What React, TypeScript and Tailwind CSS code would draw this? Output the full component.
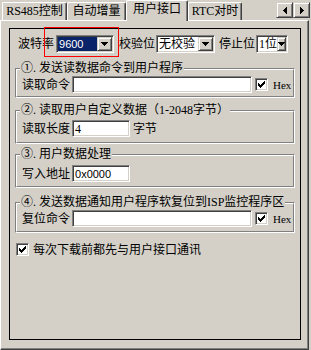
import React from "react";

const sunken =
  "border border-t-[#808080] border-l-[#808080] border-b-white border-r-white shadow-[inset_1px_1px_0_#404040,inset_-1px_-1px_0_#d4d0c8]";
const raised =
  "border border-t-[#d4d0c8] border-l-[#d4d0c8] border-b-[#404040] border-r-[#404040] shadow-[inset_1px_1px_0_#fff,inset_-1px_-1px_0_#808080]";

// pixel glyphs
const DOWN = "M0 0h7v1h-7zM1 1h5v1h-5zM2 2h3v1h-3zM3 3h1v1h-1z";
const LEFT = "M0 3h1v1h-1zM1 2h1v3h-1zM2 1h1v5h-1zM3 0h1v7h-1z";
const RIGHT = "M3 3h1v1h-1zM2 2h1v3h-1zM1 1h1v5h-1zM0 0h1v7h-1z";
const CHECK =
  "M6 0h1v1h-1zM5 1h2v1h-2zM0 2h1v1h-1zM4 2h3v1h-3zM0 3h2v1h-2zM3 3h3v1h-3zM0 4h5v1h-5zM1 5h3v1h-3zM2 6h1v1h-1z";

const Px = ({ d, w, h }: { d: string; w: number; h: number }) => (
  <svg width={w} height={h} viewBox={`0 0 ${w} ${h}`} shapeRendering="crispEdges">
    <path d={d} fill="#000" />
  </svg>
);

const Combo = ({
  w,
  selected,
  children,
}: {
  w: string;
  selected?: boolean;
  children: React.ReactNode;
}) => (
  <div className={`${w} h-[18px] bg-white p-[1px] flex ${sunken}`}>
    <div
      className={`flex-1 flex items-center pl-[1px] ${
        selected ? "bg-[#0a246a] text-white" : ""
      }`}
    >
      {children}
    </div>
    <div className={`w-[15px] h-[14px] bg-[#d4d0c8] flex items-center justify-center ${raised}`}>
      <Px d={DOWN} w={7} h={4} />
    </div>
  </div>
);

const TextBox = ({ w, children }: { w: string; children?: React.ReactNode }) => (
  <div className={`${w} ml-[2px] h-[17px] bg-white p-[1px] pl-[2px] flex items-center ${sunken}`}>
    {children}
  </div>
);

const Check = ({ cls }: { cls: string }) => (
  <div className={`w-[13px] h-[13px] bg-white p-[1px] flex items-center justify-center ${sunken} ${cls}`}>
    <Px d={CHECK} w={7} h={7} />
  </div>
);

const Dot = () => <span className="mr-[3px]">.</span>;

const Group = ({
  title,
  cls,
  row,
  children,
}: {
  title: React.ReactNode;
  cls: string;
  row: string;
  children: React.ReactNode;
}) => (
  <div
    className={`ml-[5px] w-[280px] border border-t-[#808080] border-l-[#808080] border-b-white border-r-white ${cls}`}
  >
    <div className="border border-t-white border-l-white border-b-[#808080] border-r-[#808080]">
      <div className="-mt-[8px] ml-[3px] w-fit h-[12px] px-[1px] bg-[#d4d0c8] whitespace-nowrap">
        {title}
      </div>
      <div className={`flex items-center pl-[5px] ${row}`}>{children}</div>
    </div>
  </div>
);

const Tab = ({ label, w, active }: { label: string; w: string; active?: boolean }) =>
  active ? (
    <div
      className={`${w} h-[21px] relative z-10 bg-[#d4d0c8] border-t border-l border-r border-t-white border-l-white border-r-[#404040] shadow-[inset_-1px_0_0_#808080] rounded-t-[2px] flex justify-center pt-[2px] whitespace-nowrap`}
    >
      {label}
    </div>
  ) : (
    <div
      className={`${w} mt-[2px] h-[18px] border-t border-l border-r border-t-white border-l-white border-r-[#404040] shadow-[inset_-1px_0_0_#808080] rounded-t-[2px] flex justify-center pt-[2px] whitespace-nowrap`}
    >
      {label}
    </div>
  );

export default function App() {
  return (
    <div className="w-[311px] h-[350px] bg-[#d4d0c8] relative overflow-hidden text-black text-[12px] leading-[12px] font-['Liberation_Serif','Noto_Sans_CJK_SC',serif]">
      {/* Tabs */}
      <div className="h-[20px] flex items-start">
        <div className="ml-[2px] flex items-start">
          <Tab label="RS485控制" w="w-[65px]" />
          <Tab label="自动增量" w="w-[59px]" />
          <Tab label="用户接口" w="w-[62px]" active />
          <Tab label="RTC对时" w="w-[54px]" />
        </div>
        <div className="ml-auto mr-[1px] mt-[2px] flex">
          <div className={`w-[17px] h-[16px] flex items-center justify-center ${raised}`}>
            <Px d={LEFT} w={4} h={7} />
          </div>
          <div className={`w-[17px] h-[16px] flex items-center justify-center ${raised}`}>
            <Px d={RIGHT} w={4} h={7} />
          </div>
        </div>
      </div>

      {/* Tab page */}
      <div className="w-[309px] h-[330px] border border-t-white border-l-white border-r-[#404040] border-b-[#404040] shadow-[inset_-1px_-1px_0_#808080]">
        <div className="ml-[8px] mt-[7px] w-[292px] h-[312px] border border-black pt-[6px] flex flex-col">
          {/* Serial settings */}
          <div className="h-[18px] pl-[8px] flex items-center whitespace-nowrap">
            <span>波特率</span>
            <div className="ml-[2px]">
              <Combo w="w-[58px]" selected>
                <span className="font-['Liberation_Sans',sans-serif] text-[11px]">9600</span>
              </Combo>
            </div>
            <span className="ml-[5px]">校验位</span>
            <div className="ml-[1px]">
              <Combo w="w-[59px]">无校验</Combo>
            </div>
            <span className="ml-[4px]">停止位</span>
            <div className="ml-[1px]">
              <Combo w="w-[32px]">1位</Combo>
            </div>
          </div>

          <Group
            title={<>①<Dot />发送读数据命令到用户程序</>}
            cls="mt-[15px]"
            row="mt-[2px] pb-[3px]"
          >
            <span>读取命令</span>
            <TextBox w="w-[180px]" />
            <Check cls="ml-[3px]" />
            <span className="ml-[5px] text-[11px]">Hex</span>
          </Group>

          <Group
            title={<>②<Dot />读取用户自定义数据（1-2048字节）</>}
            cls="mt-[12px]"
            row="mt-[4px] pb-[5px]"
          >
            <span>读取长度</span>
            <TextBox w="w-[58px]">4</TextBox>
            <span className="ml-[3px]">字节</span>
          </Group>

          <Group title={<>③<Dot />用户数据处理</>} cls="mt-[10px]" row="mt-[5px] pb-[4px]">
            <span>写入地址</span>
            <TextBox w="w-[58px]">
              <span className="font-['Liberation_Sans',sans-serif] text-[11px]">0x0000</span>
            </TextBox>
          </Group>

          <Group
            title={<>④<Dot />发送数据通知用户程序软复位到ISP监控程序区</>}
            cls="mt-[14px]"
            row="mt-[2px] pb-[4px]"
          >
            <span>复位命令</span>
            <TextBox w="w-[180px]" />
            <Check cls="ml-[3px]" />
            <span className="ml-[5px] text-[11px]">Hex</span>
          </Group>

          <div className="mt-[10px] ml-[6px] flex items-center">
            <Check cls="" />
            <span className="ml-[4px]">每次下载前都先与用户接口通讯</span>
          </div>
        </div>
      </div>

      {/* red highlight annotation */}
      <div className="absolute left-[44px] top-[27px] w-[75px] h-[30px] border border-[#ff0000]" />
    </div>
  );
}
